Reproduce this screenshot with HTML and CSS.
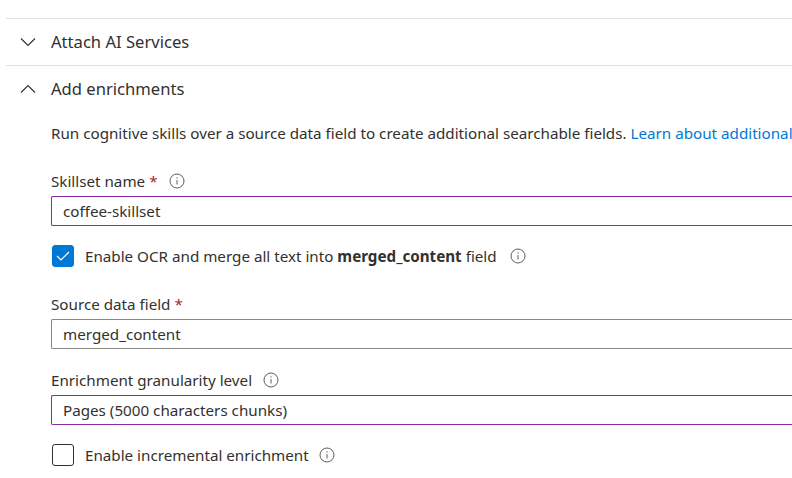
FILE: index.html
```html
<!DOCTYPE html>
<html>
<head>
<meta charset="utf-8">
<link rel="stylesheet" href="styles.css">
</head>
<body>
<div class="accordion">
  <div class="item">
    <div class="item-header">
      <svg class="chev" width="16" height="10" viewBox="0 0 16 10"><path d="M1 1.5 L8 8.5 L15 1.5" fill="none" stroke="#323130" stroke-width="1.1"/></svg>
      <span class="item-title">Attach AI Services</span>
    </div>
  </div>
  <div class="item">
    <div class="item-header">
      <svg class="chev" width="16" height="10" viewBox="0 0 16 10"><path d="M1 8.5 L8 1.5 L15 8.5" fill="none" stroke="#323130" stroke-width="1.1"/></svg>
      <span class="item-title">Add enrichments</span>
    </div>
    <div class="item-body">
      <p class="desc">Run cognitive skills over a source data field to create additional searchable fields. <a class="link" href="#">Learn about additional skills</a></p>

      <div class="field first">
        <div class="label">Skillset name <span class="req">*</span>
          <svg class="info" width="16" height="16" viewBox="0 0 16 16"><circle cx="8" cy="8" r="7" fill="none" stroke="#605e5c" stroke-width="1"/><line x1="8" y1="7" x2="8" y2="11.5" stroke="#605e5c" stroke-width="1"/><circle cx="8" cy="4.9" r="0.7" fill="#605e5c"/></svg>
        </div>
        <div class="input focus">coffee-skillset</div>
      </div>

      <label class="check">
        <span class="box checked"><svg width="14" height="10" viewBox="0 0 14 10"><path d="M1 5 L5 9 L13 1" fill="none" stroke="#fff" stroke-width="1.2"/></svg></span>
        <span class="check-text">Enable OCR and merge all text into <b>merged_content</b> field</span>
        <svg class="info wide" width="16" height="16" viewBox="0 0 16 16"><circle cx="8" cy="8" r="7" fill="none" stroke="#605e5c" stroke-width="1"/><line x1="8" y1="7" x2="8" y2="11.5" stroke="#605e5c" stroke-width="1"/><circle cx="8" cy="4.9" r="0.7" fill="#605e5c"/></svg>
      </label>

      <div class="field second">
        <div class="label">Source data field <span class="req">*</span></div>
        <div class="input">merged_content</div>
      </div>

      <div class="field third">
        <div class="label">Enrichment granularity level
          <svg class="info" width="16" height="16" viewBox="0 0 16 16"><circle cx="8" cy="8" r="7" fill="none" stroke="#605e5c" stroke-width="1"/><line x1="8" y1="7" x2="8" y2="11.5" stroke="#605e5c" stroke-width="1"/><circle cx="8" cy="4.9" r="0.7" fill="#605e5c"/></svg>
        </div>
        <div class="input focus">Pages (5000 characters chunks)</div>
      </div>

      <label class="check">
        <span class="box"></span>
        <span class="check-text">Enable incremental enrichment</span>
        <svg class="info" width="16" height="16" viewBox="0 0 16 16"><circle cx="8" cy="8" r="7" fill="none" stroke="#605e5c" stroke-width="1"/><line x1="8" y1="7" x2="8" y2="11.5" stroke="#605e5c" stroke-width="1"/><circle cx="8" cy="4.9" r="0.7" fill="#605e5c"/></svg>
      </label>
    </div>
  </div>
</div>
</body>
</html>
```

FILE: styles.css
```css
html, body {
  margin: 0;
  padding: 0;
  background: #fff;
  overflow: hidden;
}
body {
  font-family: "Noto Sans", "Open Sans", sans-serif;
  color: #323130;
  font-size: 15.2px;
}
.accordion {
  margin-top: 18px;
  margin-left: 6px;
}
.item {
  border-top: 1px solid #e1dfdd;
}
.item-header {
  height: 46px;
  display: flex;
  align-items: center;
}
.chev {
  margin-left: 14px;
  margin-right: 15px;
  display: block;
}
.item-title {
  font-size: 16.6px;
  line-height: 24px;
}
.item-body {
  padding-left: 45px;
}
.desc {
  margin: 11px 0 0 0;
  line-height: 20px;
  white-space: nowrap;
  overflow: hidden;
}
.link {
  color: #0078d4;
  text-decoration: none;
}
.field {
  display: flex;
  flex-direction: column;
}
.field.first { margin-top: 28px; }
.field.second { margin-top: 27px; }
.field.third { margin-top: 21px; }
.label {
  display: flex;
  align-items: center;
  line-height: 20px;
  height: 20px;
  white-space: nowrap;
}
.req {
  color: #a4262c;
  margin-left: 4px;
}
.label .info {
  margin-left: 11px;
}
.input {
  margin-top: 5px;
  height: 30px;
  box-sizing: border-box;
  border: 1px solid #8a8886;
  border-right: none;
  border-radius: 2px 0 0 2px;
  padding-left: 11px;
  display: flex;
  align-items: center;
  white-space: nowrap;
}
.input.focus {
  border-color: #8a2da5;
}
.check {
  display: flex;
  align-items: center;
  height: 22px;
  margin-top: 19px;
  white-space: nowrap;
}
.box {
  width: 22px;
  height: 22px;
  box-sizing: border-box;
  border: 1px solid #323130;
  border-radius: 3px;
  margin-left: 1px;
  display: flex;
  align-items: center;
  justify-content: center;
}
.box.checked {
  background: #0078d4;
  border-color: #0078d4;
}
.check-text {
  margin-left: 11px;
}
.check-text b {
  font-weight: 700;
}
.check .info {
  margin-left: 10px;
}
.check .info.wide {
  margin-left: 13px;
}
```
